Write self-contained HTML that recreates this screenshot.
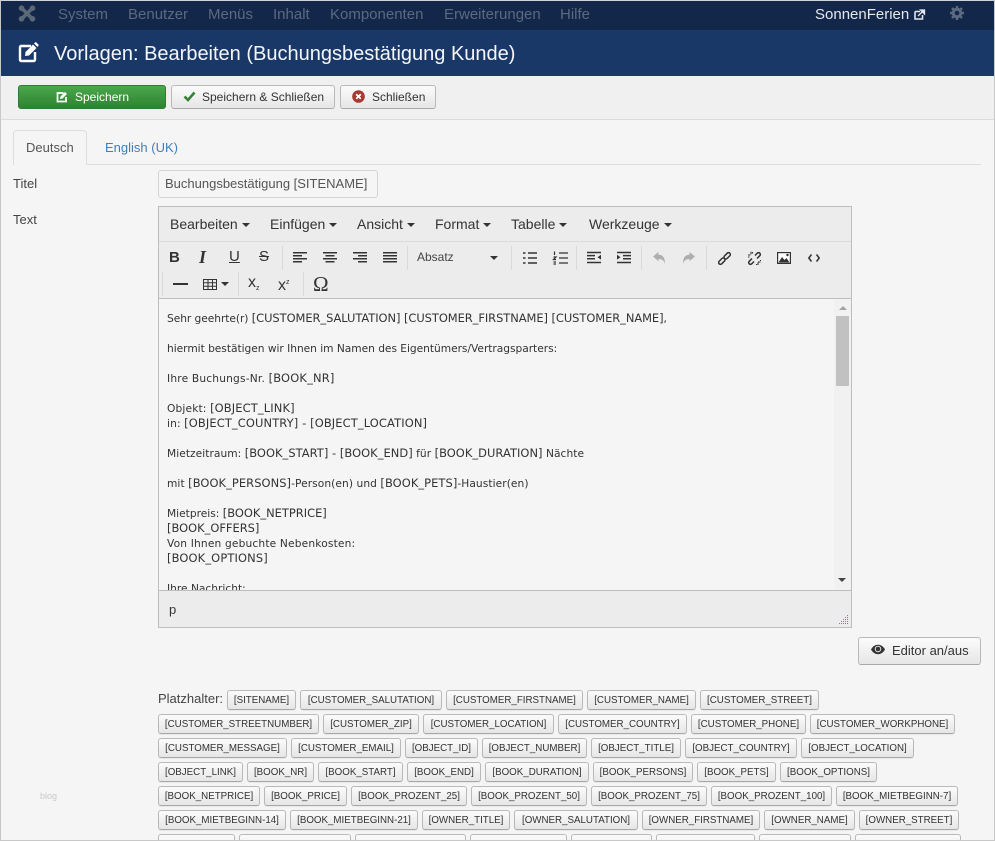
<!DOCTYPE html>
<html lang="de"><head><meta charset="utf-8"><title>Vorlagen: Bearbeiten</title>
<style>
html,body{margin:0;padding:0;width:995px;height:841px;overflow:hidden}
body{position:relative;background:#f5f5f5;font-family:"Liberation Sans",sans-serif;color:#333}
#w{position:absolute;left:0;top:0;width:995px;height:841px;overflow:hidden}
.a{position:absolute;white-space:nowrap}
.m{top:6px;font-size:15px;line-height:17px;color:#5b6a80}
.btn{position:absolute;box-sizing:border-box;border:1px solid #b9b9b9;border-bottom-color:#a8a8a8;border-radius:3px;background:linear-gradient(#fbfbfb,#e6e6e6);white-space:nowrap}
.t{height:20px;font-size:9.75px;line-height:19px;text-align:center;color:#333;box-shadow:0 1px 1px rgba(0,0,0,.06)}
.mb{top:216px;font-size:14px;line-height:16px;color:#333}
.mb:after{content:"";display:inline-block;border:4px solid transparent;border-top-color:#333;border-bottom:0;margin-left:4px;vertical-align:2px}
.sep{position:absolute;width:1px;height:24px;background:#d9d9d9}
.e{left:167px;font-family:"DejaVu Sans",sans-serif;font-size:10.65px;line-height:15px;color:#333}
.e b{font-weight:normal;font-size:11.45px}
svg{position:absolute;overflow:visible}
</style></head><body><div id="w">

<!-- frame -->
<div class="a" style="left:0;top:0;width:995px;height:1px;background:#cfd3d8"></div>
<div class="a" style="left:0;top:1px;width:995px;height:29px;background:#13274a"></div>
<div class="a" style="left:0;top:30px;width:995px;height:46px;background:#1a3867"></div>
<div class="a" style="left:0;top:76px;width:995px;height:44px;background:#f0f0f0;border-bottom:1px solid #dcdcdc;box-sizing:border-box"></div>

<!-- top nav -->
<svg style="left:18px;top:5px" width="18" height="17" viewBox="0 0 18 17"><g fill="none" stroke="#5b6878" stroke-width="3.600"><path d="M4 3.500 14 13.500M14 3.500 4 13.500"/></g><g fill="#5b6878"><circle cx="3.500" cy="3.200" r="2.800"/><circle cx="14.500" cy="3.200" r="2.800"/><circle cx="3.500" cy="13.800" r="2.800"/><circle cx="14.500" cy="13.800" r="2.800"/></g></svg>
<div class="a m" style="left:58px">System</div>
<div class="a m" style="left:128px">Benutzer</div>
<div class="a m" style="left:208px">Menüs</div>
<div class="a m" style="left:273px">Inhalt</div>
<div class="a m" style="left:330px">Komponenten</div>
<div class="a m" style="left:444px">Erweiterungen</div>
<div class="a m" style="left:560px">Hilfe</div>
<div class="a m" style="left:815px;color:#e4e7eb">SonnenFerien</div>
<svg style="left:914px;top:9px" width="11" height="11" viewBox="0 0 11 11"><path d="M1 2.500h5M1 2.500v7.500h7.500V6" fill="none" stroke="#e4e7eb" stroke-width="1.600"/><path d="M4 7 9.500 1.500M6.500 1h4v4z" fill="#e4e7eb" stroke="#e4e7eb" stroke-width="1.300"/></svg>
<svg style="left:950px;top:6px" width="14" height="14" viewBox="0 0 14 14"><circle cx="7" cy="7" r="3.800" fill="none" stroke="#5b6a80" stroke-width="3"/><path d="M7 0v3M7 11v3M0 7h3M11 7h3M2 2l2 2M10 10l2 2M12 2l-2 2M4 10l-2 2" stroke="#5b6a80" stroke-width="2.400"/></svg>

<!-- title -->
<svg style="left:18px;top:42px" width="21" height="21" viewBox="0 0 21 21"><path d="M13 4H3.200A1.200 1.200 0 0 0 2 5.200v12.600A1.200 1.200 0 0 0 3.200 19h12.600a1.200 1.200 0 0 0 1.200-1.200V10" fill="none" stroke="#fff" stroke-width="2.400"/><path d="M7.500 10 15 2.500l3.500 3.500L11 13.500l-4 .5zM16 1.500l1-1a1 1 0 0 1 1.400 0l2 2a1 1 0 0 1 0 1.400l-1 1z" fill="#fff"/></svg>
<div class="a" style="left:54px;top:42px;font-size:20px;line-height:24px;color:#f4f6f9">Vorlagen: Bearbeiten (Buchungsbestätigung Kunde)</div>

<!-- toolbar -->
<div class="btn" style="left:18px;top:85px;width:148px;height:24px;background:linear-gradient(#4aa84c,#2f8231);border-color:#2e7d32"></div>
<svg style="left:56px;top:91px" width="12" height="12" viewBox="0 0 12 12"><path d="M7.500 2H1.500v8.500H10V6" fill="none" stroke="#fff" stroke-width="1.700"/><path d="M4.500 5.500 9 1l2 2-4.500 4.500-2.500.5z" fill="#fff"/></svg>
<div class="a" style="left:75px;top:89px;font-size:12px;line-height:16px;color:#fff">Speichern</div>
<div class="btn" style="left:171px;top:85px;width:164px;height:24px"></div>
<svg style="left:183px;top:91px" width="13" height="11" viewBox="0 0 13 11"><path d="M1.500 5.500 5 9l6.500-7.500" fill="none" stroke="#378137" stroke-width="2.600"/></svg>
<div class="a" style="left:202px;top:89px;font-size:12px;line-height:16px">Speichern &amp; Schließen</div>
<div class="btn" style="left:340px;top:85px;width:96px;height:24px"></div>
<svg style="left:352px;top:90px" width="13" height="13" viewBox="0 0 13 13"><circle cx="6.500" cy="6.500" r="6.300" fill="#a63a30"/><path d="M4.200 4.200 8.800 8.800M8.800 4.200 4.200 8.800" stroke="#fff" stroke-width="1.800"/></svg>
<div class="a" style="left:372px;top:89px;font-size:12px;line-height:16px">Schließen</div>

<!-- tabs -->
<div class="a" style="left:13px;top:164px;width:968px;height:1px;background:#ddd"></div>
<div class="a" style="left:13px;top:130px;width:74px;height:35px;box-sizing:border-box;border:1px solid #ddd;border-bottom:0;border-radius:4px 4px 0 0;background:#f5f5f5"></div>
<div class="a" style="left:26px;top:139px;font-size:13px;line-height:17px;color:#555">Deutsch</div>
<div class="a" style="left:105px;top:139px;font-size:13px;line-height:17px;color:#3f7fbd">English (UK)</div>

<div class="a" style="left:13px;top:175px;font-size:13px;line-height:17px;color:#444">Titel</div>
<div class="a" style="left:158px;top:170px;width:220px;height:28px;box-sizing:border-box;border:1px solid #d4d4d4;border-radius:3px;padding-left:6px;font-size:13px;line-height:26px;color:#555">Buchungsbestätigung [SITENAME]</div>
<div class="a" style="left:13px;top:211px;font-size:13px;line-height:17px;color:#444">Text</div>

<!-- editor -->
<div class="a" style="left:158px;top:206px;width:694px;height:422px;box-sizing:border-box;border:1px solid #bdbdbd;background:#ececec"></div>
<div class="a" style="left:159px;top:241px;width:692px;height:1px;background:#dadada"></div>
<div class="a" style="left:159px;top:298px;width:692px;height:1px;background:#bdbdbd"></div>
<div class="a" style="left:159px;top:299px;width:692px;height:291px;background:#f5f5f5;overflow:hidden"></div>
<div class="a" style="left:159px;top:590px;width:692px;height:1px;background:#bdbdbd"></div>

<div class="a mb" style="left:170px">Bearbeiten</div>
<div class="a mb" style="left:270px">Einfügen</div>
<div class="a mb" style="left:357px">Ansicht</div>
<div class="a mb" style="left:435px">Format</div>
<div class="a mb" style="left:511px">Tabelle</div>
<div class="a mb" style="left:589px">Werkzeuge</div>

<div class="a" style="left:169px;top:249px;font-size:15px;line-height:18px;font-weight:bold;color:#333">B</div>
<div class="a" style="left:199px;top:248px;font-family:'Liberation Serif',serif;font-size:18px;line-height:18px;font-weight:bold;font-style:italic;color:#333">I</div>
<div class="a" style="left:229px;top:248px;font-size:15px;line-height:18px;color:#333;text-decoration:underline">U</div>
<div class="a" style="left:259px;top:248px;font-size:15px;line-height:18px;color:#333;text-decoration:line-through">S</div>
<div class="sep" style="left:282px;top:246px"></div>
<svg style="left:293px;top:252px" width="110" height="12" viewBox="0 0 110 12" fill="none" stroke="#333" stroke-width="1.500"><path d="M0 .8h14M0 3.800h9M0 6.800h14M0 9.800h9"/><path d="M30 .8h14M32.500 3.800h9M30 6.800h14M32.500 9.800h9"/><path d="M60 .8h14M65 3.800h9M60 6.800h14M65 9.800h9"/><path d="M90 .8h14M90 3.800h14M90 6.800h14M90 9.800h14"/></svg>
<div class="sep" style="left:407px;top:246px"></div>
<div class="a" style="left:417px;top:250px;font-size:12px;line-height:15px;color:#444">Absatz</div>
<div class="a" style="left:490px;top:256px;border:4px solid transparent;border-top-color:#333;border-bottom:0"></div>
<div class="sep" style="left:511px;top:246px"></div>
<svg style="left:523px;top:251px" width="115" height="14" viewBox="0 0 115 14" fill="none" stroke="#333" stroke-width="1.500"><path d="M5 2h9M5 7h9M5 12h9"/><path d="M0 2h2.500M0 7h2.500M0 12h2.500"/><path d="M36 2h9M36 7h9M36 12h9M31.500 .5v3.500M30.500 6h2.500L30.500 8.500h2.500M30.500 11h2.500M30.500 13h2.500" stroke-width="1.200"/><path d="M64 1.500h14M64 4.600h8M64 7.700h8M64 11.500h14"/><path d="M78 3.800 74.500 6.200l3.500 2.400z" fill="#333" stroke="none"/><path d="M94 1.500h14M100 4.600h8M100 7.700h8M94 11.500h14"/><path d="M94 3.800 97.500 6.200 94 8.600z" fill="#333" stroke="none"/></svg>
<div class="sep" style="left:641px;top:246px"></div>
<div class="sep" style="left:576px;top:246px"></div>
<svg style="left:653px;top:252px" width="42" height="13" viewBox="0 0 42 13" fill="#aeaeae"><path d="M0 4.500 5.500 0v2.800c4 0 6.500 2.500 6.500 9-1.300-3.500-3-4.800-6.500-4.800V9.200z"/><path d="M42 4.500 36.500 0v2.800c-4 0-6.500 2.500-6.500 9 1.300-3.500 3-4.800 6.500-4.800v2.200z"/></svg>
<div class="sep" style="left:706px;top:246px"></div>
<svg style="left:717px;top:251px" width="15" height="15" viewBox="0 0 15 15" fill="none" stroke="#333" stroke-width="1.500"><rect x="-3" y="-1.800" width="7.500" height="3.600" rx="1.800" transform="translate(4.300 10.700) rotate(-45)"/><rect x="-4.500" y="-1.800" width="7.500" height="3.600" rx="1.800" transform="translate(10.700 4.300) rotate(-45)"/></svg>
<svg style="left:747px;top:251px" width="15" height="15" viewBox="0 0 15 15" fill="none" stroke="#333" stroke-width="1.500"><path d="M5 7.500 2.200 10.300a1.700 1.700 0 0 0 2.500 2.500L7 10.500M8 4.500l2.300-2.300a1.700 1.700 0 0 1 2.500 2.500L10 7.500"/><path d="M1 4h2.500M4 .8v2.500M11 11h2.500M11 11.500V14M5.500 1v1.500M1 6h1.500M13 9.500h1M9.500 13v1" stroke-width="1.100"/></svg>
<svg style="left:777px;top:252px" width="14" height="12" viewBox="0 0 14 12"><rect x=".6" y=".6" width="12.800" height="10.800" fill="#fff" stroke="#333" stroke-width="1.200"/><path d="M1.500 10.500 5 5l2.500 3L9.500 6l3 4.500z" fill="#333"/><circle cx="10.500" cy="3" r="1.200" fill="#333"/></svg>
<svg style="left:808px;top:254px" width="12" height="8" viewBox="0 0 12 8" fill="none" stroke="#333" stroke-width="1.500"><path d="M3.500 .5 .8 4l2.700 3.500M8.500 .5 11.200 4 8.500 7.500"/></svg>

<div class="sep" style="left:162px;top:272px"></div>
<div class="a" style="left:173px;top:283px;width:15px;height:2px;background:#333"></div>
<svg style="left:203px;top:279px" width="14" height="11" viewBox="0 0 14 11" fill="none" stroke="#333" stroke-width="1"><rect x=".5" y=".5" width="13" height="10"/><path d="M.5 3.800h13M.5 7.200h13M5 .5v10M9.500 .5v10"/></svg>
<div class="a" style="left:221px;top:282px;border:4px solid transparent;border-top-color:#333;border-bottom:0"></div>
<div class="sep" style="left:238px;top:272px"></div>
<div class="a" style="left:248px;top:275px;font-size:16px;line-height:16px;color:#333">x<span style="font-size:7px;vertical-align:-3px">z</span></div>
<div class="a" style="left:278px;top:275px;font-size:16px;line-height:16px;color:#333">x<span style="font-size:7px;vertical-align:6px">z</span></div>
<div class="sep" style="left:303px;top:272px"></div>
<div class="a" style="left:313px;top:273px;font-family:'Liberation Serif',serif;font-size:21px;line-height:22px;color:#333">Ω</div>

<!-- editor text -->
<div class="a" style="left:159px;top:299px;width:675px;height:291px;overflow:hidden">
<div style="position:relative;left:-159px;top:-299px;height:600px">
<div class="a e" style="top:311px;letter-spacing:-.05px">Sehr geehrte(r) <b>[CUSTOMER_SALUTATION] [CUSTOMER_FIRSTNAME] [CUSTOMER_NAME]</b>,</div>
<div class="a e" style="top:341px;letter-spacing:-.03px">hiermit bestätigen wir Ihnen im Namen des Eigentümers/Vertragsparters:</div>
<div class="a e" style="top:371px;letter-spacing:.18px">Ihre Buchungs-Nr. <b>[BOOK_NR]</b></div>
<div class="a e" style="top:401px;letter-spacing:.14px">Objekt: <b>[OBJECT_LINK]</b></div>
<div class="a e" style="top:416px;letter-spacing:.125px">in: <b>[OBJECT_COUNTRY] - [OBJECT_LOCATION]</b></div>
<div class="a e" style="top:446px;letter-spacing:.045px">Mietzeitraum: <b>[BOOK_START] - [BOOK_END]</b> für <b>[BOOK_DURATION]</b> Nächte</div>
<div class="a e" style="top:476px;letter-spacing:.07px">mit <b>[BOOK_PERSONS]</b>-Person(en) und <b>[BOOK_PETS]</b>-Haustier(en)</div>
<div class="a e" style="top:506px">Mietpreis: <b>[BOOK_NETPRICE]</b></div>
<div class="a e" style="top:521px"><b>[BOOK_OFFERS]</b></div>
<div class="a e" style="top:536px;letter-spacing:.16px">Von Ihnen gebuchte Nebenkosten:</div>
<div class="a e" style="top:551px;letter-spacing:.14px"><b>[BOOK_OPTIONS]</b></div>
<div class="a e" style="top:581px">Ihre Nachricht:</div>
</div></div>

<!-- scrollbar -->
<div class="a" style="left:834px;top:299px;width:17px;height:291px;background:#f1f1f1"></div>
<div class="a" style="left:836px;top:316px;width:13px;height:70px;background:#c1c1c1"></div>
<div class="a" style="left:839px;top:306px;border:4px solid transparent;border-bottom-color:#a3a3a3;border-top:0"></div>
<div class="a" style="left:838px;top:578px;border:4.500px solid transparent;border-top-color:#444;border-bottom:0"></div>

<!-- status -->
<div class="a" style="left:169px;top:602px;font-size:13px;line-height:16px;color:#333">p</div>
<svg style="left:839px;top:615px" width="10" height="10" viewBox="0 0 10 10" fill="#8a7a8a"><path d="M8 0h1v1H8zM6 2h1v1H6zM8 2h1v1H8zM4 4h1v1H4zM6 4h1v1H6zM8 4h1v1H8zM2 6h1v1H2zM4 6h1v1H4zM6 6h1v1H6zM8 6h1v1H8zM0 8h1v1H0zM2 8h1v1H2zM4 8h1v1H4zM6 8h1v1H6zM8 8h1v1H8z"/></svg>

<!-- editor toggle -->
<div class="btn" style="left:858px;top:637px;width:123px;height:28px"></div>
<svg style="left:871px;top:644px" width="14" height="11" viewBox="0 0 14 11"><path d="M0 5.500C2 2 4.500 .8 7 .8s5 1.200 7 4.700c-2 3.500-4.500 4.700-7 4.700S2 9 0 5.500z" fill="#333"/><circle cx="7" cy="5" r="2.800" fill="#333" stroke="#f0f0f0" stroke-width=".9"/></svg>
<div class="a" style="left:892px;top:642px;font-size:13px;line-height:17px;color:#333">Editor an/aus</div>

<div class="a" style="left:158px;top:690px;font-size:13px;line-height:17px;color:#444">Platzhalter:</div>
<div class="a" style="left:40px;top:790px;font-size:9px;line-height:12px;color:#c9c9c9">blog</div>

<!-- placeholders -->
<div class="btn t" style="left:227px;top:690px;width:69px">[SITENAME]</div>
<div class="btn t" style="left:300px;top:690px;width:142px">[CUSTOMER_SALUTATION]</div>
<div class="btn t" style="left:446px;top:690px;width:137px">[CUSTOMER_FIRSTNAME]</div>
<div class="btn t" style="left:587px;top:690px;width:109px">[CUSTOMER_NAME]</div>
<div class="btn t" style="left:700px;top:690px;width:119px">[CUSTOMER_STREET]</div>

<div class="btn t" style="left:158px;top:714px;width:161px">[CUSTOMER_STREETNUMBER]</div>
<div class="btn t" style="left:323px;top:714px;width:96px">[CUSTOMER_ZIP]</div>
<div class="btn t" style="left:423px;top:714px;width:131px">[CUSTOMER_LOCATION]</div>
<div class="btn t" style="left:558px;top:714px;width:129px">[CUSTOMER_COUNTRY]</div>
<div class="btn t" style="left:691px;top:714px;width:115px">[CUSTOMER_PHONE]</div>
<div class="btn t" style="left:810px;top:714px;width:145px">[CUSTOMER_WORKPHONE]</div>

<div class="btn t" style="left:158px;top:738px;width:129px">[CUSTOMER_MESSAGE]</div>
<div class="btn t" style="left:291px;top:738px;width:110px">[CUSTOMER_EMAIL]</div>
<div class="btn t" style="left:405px;top:738px;width:73px">[OBJECT_ID]</div>
<div class="btn t" style="left:482px;top:738px;width:105px">[OBJECT_NUMBER]</div>
<div class="btn t" style="left:591px;top:738px;width:90px">[OBJECT_TITLE]</div>
<div class="btn t" style="left:685px;top:738px;width:112px">[OBJECT_COUNTRY]</div>
<div class="btn t" style="left:801px;top:738px;width:113px">[OBJECT_LOCATION]</div>

<div class="btn t" style="left:158px;top:762px;width:85px">[OBJECT_LINK]</div>
<div class="btn t" style="left:247px;top:762px;width:67px">[BOOK_NR]</div>
<div class="btn t" style="left:318px;top:762px;width:85px">[BOOK_START]</div>
<div class="btn t" style="left:407px;top:762px;width:74px">[BOOK_END]</div>
<div class="btn t" style="left:485px;top:762px;width:104px">[BOOK_DURATION]</div>
<div class="btn t" style="left:593px;top:762px;width:100px">[BOOK_PERSONS]</div>
<div class="btn t" style="left:697px;top:762px;width:79px">[BOOK_PETS]</div>
<div class="btn t" style="left:780px;top:762px;width:97px">[BOOK_OPTIONS]</div>

<div class="btn t" style="left:158px;top:786px;width:102px">[BOOK_NETPRICE]</div>
<div class="btn t" style="left:264px;top:786px;width:83px">[BOOK_PRICE]</div>
<div class="btn t" style="left:351px;top:786px;width:116px">[BOOK_PROZENT_25]</div>
<div class="btn t" style="left:471px;top:786px;width:116px">[BOOK_PROZENT_50]</div>
<div class="btn t" style="left:591px;top:786px;width:116px">[BOOK_PROZENT_75]</div>
<div class="btn t" style="left:711px;top:786px;width:121px">[BOOK_PROZENT_100]</div>
<div class="btn t" style="left:836px;top:786px;width:122px">[BOOK_MIETBEGINN-7]</div>

<div class="btn t" style="left:158px;top:810px;width:128px">[BOOK_MIETBEGINN-14]</div>
<div class="btn t" style="left:290px;top:810px;width:128px">[BOOK_MIETBEGINN-21]</div>
<div class="btn t" style="left:422px;top:810px;width:88px">[OWNER_TITLE]</div>
<div class="btn t" style="left:514px;top:810px;width:124px">[OWNER_SALUTATION]</div>
<div class="btn t" style="left:642px;top:810px;width:118px">[OWNER_FIRSTNAME]</div>
<div class="btn t" style="left:764px;top:810px;width:91px">[OWNER_NAME]</div>
<div class="btn t" style="left:859px;top:810px;width:100px">[OWNER_STREET]</div>

<div class="btn t" style="left:158px;top:834px;width:77px"></div>
<div class="btn t" style="left:239px;top:834px;width:112px"></div>
<div class="btn t" style="left:355px;top:834px;width:111px"></div>
<div class="btn t" style="left:470px;top:834px;width:97px"></div>
<div class="btn t" style="left:571px;top:834px;width:81px"></div>
<div class="btn t" style="left:656px;top:834px;width:99px"></div>
<div class="btn t" style="left:759px;top:834px;width:92px"></div>
<div class="btn t" style="left:855px;top:834px;width:106px"></div>

<!-- outer frame lines -->
<div class="a" style="left:0;top:0;width:1px;height:841px;background:#c8c8c8"></div>
<div class="a" style="left:994px;top:0;width:1px;height:841px;background:#c8c8c8"></div>
<div class="a" style="left:0;top:840px;width:995px;height:1px;background:#c8c8c8"></div>
</div></body></html>
